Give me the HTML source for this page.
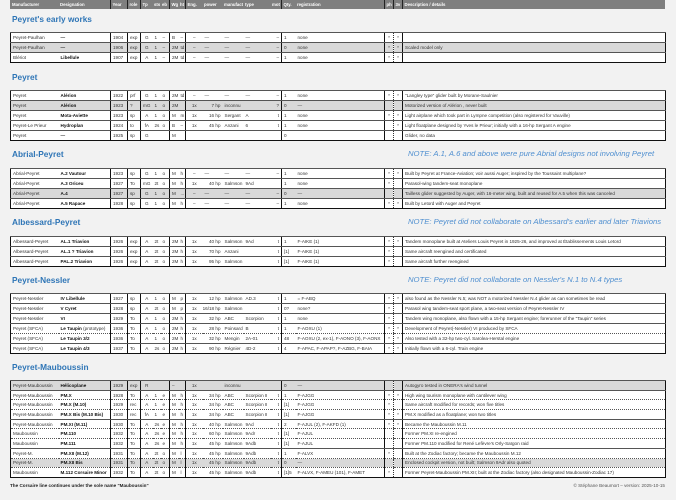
<!DOCTYPE html>
<html><head><meta charset="utf-8"><style>
body{margin:0;width:676px;height:500px;background:#f2f2f2;position:relative;overflow:hidden;font-family:"Liberation Sans",sans-serif}
table{position:absolute;left:10px;width:655px;border-collapse:collapse;table-layout:fixed;background:#fff;font-size:4.6px;color:#333;border:1.5px solid #111}
td{height:9px;padding:0 0 0 2px;white-space:nowrap;overflow:hidden;border-top:1px solid #555;line-height:9px;vertical-align:middle}
table.m td{height:8.7px;line-height:7px}
col.v{border-left:1px solid #111}
col.d{border-left:1px dotted #333}
td.c{text-align:center;padding:0}
td.r{text-align:right;padding:0 2px 0 0}
td.n{font-weight:bold;color:#111}
tr.g td{background:#d9d9d9}
tr.dt td{border-top:1px dotted #555}
table.h{top:0;border:none;background:#7f7f7f;color:#fff;font-weight:bold;font-size:4.3px}
table.h td{border-top:none;height:9px}
table.h col.v,table.h col.d{border-left:1px solid #222}
.t{position:absolute;left:12px;font-weight:bold;font-size:8.3px;color:#2e75b6}
.note{position:absolute;font-style:italic;font-size:7.7px;color:#4f8fd0;white-space:nowrap}
.foot{position:absolute;font-size:4.6px;color:#222}
</style></head><body>

<table class="h"><colgroup><col style="width:48px"><col style="width:52px"><col class="v" style="width:17px"><col class="v" style="width:13px"><col class="v" style="width:12px"><col style="width:8px"><col style="width:9px"><col class="v" style="width:9px"><col style="width:7px"><col class="v" style="width:17px"><col style="width:20px"><col style="width:21px"><col style="width:27px"><col style="width:11px"><col class="v" style="width:14px"><col style="width:89px"><col class="v" style="width:9px"><col class="d" style="width:9px"><col class="v" style="width:263px"></colgroup>
<tr><td>Manufacturer</td><td>Designation</td><td>Year</td><td>role</td><td>Tp</td><td>sts</td><td>eb</td><td>Wg</td><td>ht</td><td>Eng.</td><td>power</td><td>manufact.</td><td>type</td><td>mot</td><td>Qty.</td><td>registration</td><td>ph</td><td>3v</td><td>Description / details</td></tr></table>

<div class="t" style="top:14px">Peyret's early works</div>
<table style="top:32px"><colgroup><col style="width:48px"><col style="width:52px"><col class="v" style="width:17px"><col class="v" style="width:13px"><col class="v" style="width:12px"><col style="width:8px"><col style="width:9px"><col class="v" style="width:9px"><col style="width:7px"><col class="v" style="width:17px"><col style="width:20px"><col style="width:21px"><col style="width:27px"><col style="width:11px"><col class="v" style="width:14px"><col style="width:89px"><col class="v" style="width:9px"><col class="d" style="width:9px"><col class="v" style="width:263px"></colgroup>
<tr><td>Peyret-Paulhan</td><td class="n">—</td><td>1904</td><td>exp</td><td class="c">G</td><td>1</td><td>–</td><td>B</td><td>–</td><td class="c">–</td><td>—</td><td>—</td><td>—</td><td class="r">–</td><td>1</td><td>none</td><td class="c">*</td><td class="c">*</td><td></td></tr>
<tr class="g"><td>Peyret-Paulhan</td><td class="n">—</td><td>1906</td><td>exp</td><td class="c">G</td><td>1</td><td>–</td><td>2M</td><td>td</td><td class="c">–</td><td>—</td><td>—</td><td>—</td><td class="r">–</td><td>0</td><td>none</td><td class="c">*</td><td class="c">*</td><td>Scaled model only</td></tr>
<tr><td>Blériot</td><td class="n">Libellule</td><td>1907</td><td>exp</td><td class="c">A</td><td>1</td><td>–</td><td>2M</td><td>td</td><td class="c">–</td><td>—</td><td>—</td><td>—</td><td class="r">–</td><td>1</td><td>none</td><td class="c">*</td><td class="c">*</td><td></td></tr>
</table>

<div class="t" style="top:72px">Peyret</div>
<table style="top:90px"><colgroup><col style="width:48px"><col style="width:52px"><col class="v" style="width:17px"><col class="v" style="width:13px"><col class="v" style="width:12px"><col style="width:8px"><col style="width:9px"><col class="v" style="width:9px"><col style="width:7px"><col class="v" style="width:17px"><col style="width:20px"><col style="width:21px"><col style="width:27px"><col style="width:11px"><col class="v" style="width:14px"><col style="width:89px"><col class="v" style="width:9px"><col class="d" style="width:9px"><col class="v" style="width:263px"></colgroup>
<tr><td>Peyret</td><td class="n">Alérion</td><td>1922</td><td>prf</td><td class="c">G</td><td>1</td><td>o</td><td>2M</td><td>td</td><td class="c">–</td><td>—</td><td>—</td><td>—</td><td class="r">–</td><td>1</td><td>none</td><td class="c">*</td><td class="c">*</td><td>"Langley type" glider built by Morane-Saulnier</td></tr>
<tr class="g"><td>Peyret</td><td class="n">Alérion</td><td>1923</td><td>?</td><td class="c">mG</td><td>1</td><td>o</td><td>2M</td><td></td><td class="c">1x</td><td class="r">7 hp</td><td>inconnu</td><td></td><td class="r">?</td><td>0</td><td>—</td><td></td><td></td><td>Motorized version of Alérion , never built</td></tr>
<tr><td>Peyret</td><td class="n">Mota-Aviette</td><td>1923</td><td>sp</td><td class="c">A</td><td>1</td><td>o</td><td>M</td><td>m</td><td class="c">1x</td><td class="r">16 hp</td><td>Sergant</td><td>A</td><td class="r">t</td><td>1</td><td>none</td><td class="c">*</td><td class="c">*</td><td>Light airplane which took part in Lympne competition (also registered for Vauville)</td></tr>
<tr><td>Peyret-Le Prieur</td><td class="n">Hydroplan</td><td>1924</td><td>to</td><td class="c">fA</td><td>2s</td><td>o</td><td>B</td><td>–</td><td class="c">1x</td><td class="r">45 hp</td><td>Anzani</td><td>6</td><td class="r">t</td><td>1</td><td>none</td><td></td><td class="c">*</td><td>Light floatplane designed by Yves le Prieur; initially with a 16-hp Sergant A engine</td></tr>
<tr><td>Peyret</td><td class="n">—</td><td>1925</td><td>sp</td><td class="c">G</td><td></td><td></td><td>M</td><td></td><td></td><td></td><td></td><td></td><td></td><td>0</td><td></td><td></td><td></td><td>Glider, no data</td></tr>
</table>

<div class="t" style="top:149px">Abrial-Peyret</div>
<div class="note" style="top:149px;left:408px">NOTE: A.1, A.6 and above were pure Abrial designs not involving Peyret</div>
<table style="top:168px"><colgroup><col style="width:48px"><col style="width:52px"><col class="v" style="width:17px"><col class="v" style="width:13px"><col class="v" style="width:12px"><col style="width:8px"><col style="width:9px"><col class="v" style="width:9px"><col style="width:7px"><col class="v" style="width:17px"><col style="width:20px"><col style="width:21px"><col style="width:27px"><col style="width:11px"><col class="v" style="width:14px"><col style="width:89px"><col class="v" style="width:9px"><col class="d" style="width:9px"><col class="v" style="width:263px"></colgroup>
<tr><td>Abrial-Peyret</td><td class="n">A.2 Vautour</td><td>1923</td><td>sp</td><td class="c">G</td><td>1</td><td>o</td><td>M</td><td>h</td><td class="c">–</td><td>—</td><td>—</td><td>—</td><td class="r">–</td><td>1</td><td>none</td><td class="c">*</td><td class="c">*</td><td>Built by Peyret at France-Aviation; voir aussi Auger; inspired by the Toussaint multiplane?</td></tr>
<tr><td>Abrial-Peyret</td><td class="n">A.3 Oriceu</td><td>1927</td><td>To</td><td class="c">mG</td><td>2t</td><td>o</td><td>M</td><td>h</td><td class="c">1x</td><td class="r">40 hp</td><td>Salmson</td><td>9Ad</td><td></td><td>1</td><td>none</td><td class="c">*</td><td></td><td>Parasol-wing tandem-seat monoplane</td></tr>
<tr class="g"><td>Abrial-Peyret</td><td class="n">A.4</td><td>1927</td><td>sp</td><td class="c">G</td><td>1</td><td>o</td><td>M</td><td>...</td><td class="c">–</td><td>—</td><td>—</td><td>—</td><td class="r">–</td><td>0</td><td>—</td><td></td><td></td><td>Tailless glider suggested by Auger, with 16-meter wing, built and reused for A.5 when this was canceled</td></tr>
<tr><td>Abrial-Peyret</td><td class="n">A.5 Rapace</td><td>1928</td><td>sp</td><td class="c">G</td><td>1</td><td>o</td><td>M</td><td>h</td><td class="c">–</td><td>—</td><td>—</td><td>—</td><td class="r">–</td><td>1</td><td>none</td><td class="c">*</td><td class="c">*</td><td>Built by Letord with Auger and Peyret</td></tr>
</table>

<div class="t" style="top:217px">Albessard-Peyret</div>
<div class="note" style="top:217px;left:408px">NOTE: Peyret did not collaborate on Albessard's earlier and later Triavions</div>
<table style="top:236px"><colgroup><col style="width:48px"><col style="width:52px"><col class="v" style="width:17px"><col class="v" style="width:13px"><col class="v" style="width:12px"><col style="width:8px"><col style="width:9px"><col class="v" style="width:9px"><col style="width:7px"><col class="v" style="width:17px"><col style="width:20px"><col style="width:21px"><col style="width:27px"><col style="width:11px"><col class="v" style="width:14px"><col style="width:89px"><col class="v" style="width:9px"><col class="d" style="width:9px"><col class="v" style="width:263px"></colgroup>
<tr><td>Albessard-Peyret</td><td class="n">AL.1 Triavion</td><td>1926</td><td>exp</td><td class="c">A</td><td>2t</td><td>o</td><td>2M</td><td>h</td><td class="c">1x</td><td class="r">40 hp</td><td>Salmson</td><td>9Ad</td><td class="r">t</td><td>1</td><td>F-AIKE (1)</td><td class="c">*</td><td class="c">*</td><td>Tandem monoplane built at Ateliers Louis Peyret in 1925-26, and improved at Établissements Louis Letord</td></tr>
<tr><td>Albessard-Peyret</td><td class="n">AL.1 ? Triavion</td><td>1926</td><td>exp</td><td class="c">A</td><td>2t</td><td>o</td><td>2M</td><td>h</td><td class="c">1x</td><td class="r">70 hp</td><td>Anzani</td><td></td><td class="r">t</td><td>[1]</td><td>F-AIKE (1)</td><td class="c">*</td><td></td><td>Same aircraft reengined and certificated</td></tr>
<tr><td>Albessard-Peyret</td><td class="n">PAL.2 Triavion</td><td>1926</td><td>exp</td><td class="c">A</td><td>2t</td><td>o</td><td>2M</td><td>h</td><td class="c">1x</td><td class="r">95 hp</td><td>Salmson</td><td></td><td class="r">t</td><td>[1]</td><td>F-AIKE (1)</td><td class="c">*</td><td></td><td>Same aircraft further reengined</td></tr>
</table>

<div class="t" style="top:275px">Peyret-Nessler</div>
<div class="note" style="top:275px;left:408px">NOTE: Peyret did not collaborate on Nessler's N.1 to N.4 types</div>
<table style="top:293px"><colgroup><col style="width:48px"><col style="width:52px"><col class="v" style="width:17px"><col class="v" style="width:13px"><col class="v" style="width:12px"><col style="width:8px"><col style="width:9px"><col class="v" style="width:9px"><col style="width:7px"><col class="v" style="width:17px"><col style="width:20px"><col style="width:21px"><col style="width:27px"><col style="width:11px"><col class="v" style="width:14px"><col style="width:89px"><col class="v" style="width:9px"><col class="d" style="width:9px"><col class="v" style="width:263px"></colgroup>
<tr><td>Peyret-Nessler</td><td class="n">IV Libellule</td><td>1927</td><td>sp</td><td class="c">A</td><td>1</td><td>o</td><td>M</td><td>p</td><td class="c">1x</td><td class="r">12 hp</td><td>Salmson</td><td>AD.3</td><td class="r">t</td><td>1</td><td>= F-ABQ</td><td class="c">*</td><td class="c">*</td><td>also found as the Nessler N.5; was NOT a motorized Nessler N.4 glider as can sometimes be read</td></tr>
<tr><td>Peyret-Nessler</td><td class="n">V Cyret</td><td>1928</td><td>sp</td><td class="c">A</td><td>2t</td><td>o</td><td>M</td><td>p</td><td class="c">1x</td><td class="r">16/18 hp</td><td>Salmson</td><td></td><td class="r">t</td><td>0?</td><td>none?</td><td class="c">*</td><td></td><td>Parasol wing tandem-seat sport plane, a two-seat version of Peyret-Nessler IV</td></tr>
<tr><td>Peyret-Nessler</td><td class="n">VI</td><td>1929</td><td>To</td><td class="c">A</td><td>1</td><td>o</td><td>2M</td><td>h</td><td class="c">1x</td><td class="r">32 hp</td><td>ABC</td><td>Scorpion</td><td class="r">t</td><td>1</td><td>none</td><td class="c">*</td><td></td><td>Tandem wing monoplane, also flown with a 15-hp Sergant engine; forerunner of the "Taupin" series</td></tr>
<tr><td>Peyret (SFCA)</td><td><b style="color:#111">Le Taupin</b> (prototype)</td><td>1936</td><td>To</td><td class="c">A</td><td>1</td><td>o</td><td>2M</td><td>h</td><td class="c">1x</td><td class="r">28 hp</td><td>Poinsard</td><td>B</td><td class="r">t</td><td>1</td><td>F-AOXU (1)</td><td class="c">*</td><td class="c">*</td><td>Development of Peyret(-Nessler) VI produced by SFCA</td></tr>
<tr class="dt"><td>Peyret (SFCA)</td><td class="n">Le Taupin 3/2</td><td>1936</td><td>To</td><td class="c">A</td><td>1</td><td>o</td><td>2M</td><td>h</td><td class="c">1x</td><td class="r">32 hp</td><td>Mengin</td><td>2A-01</td><td class="r">t</td><td>48</td><td>F-AOXU (2, ex-1), F-AONO (3), F-AONX</td><td class="c">*</td><td class="c">*</td><td>Also tested with a 32-hp two-cyl. Sarolea-Herstal engine</td></tr>
<tr><td>Peyret (SFCA)</td><td class="n">Le Taupin 4/3</td><td>1937</td><td>To</td><td class="c">A</td><td>2s</td><td>o</td><td>2M</td><td>h</td><td class="c">1x</td><td class="r">90 hp</td><td>Régnier</td><td>4D-2</td><td class="r">t</td><td>4</td><td>F-APAC, F-APAP?, F-AZBG, F-BAIA</td><td class="c">*</td><td class="c">*</td><td>Initially flown with a 6-cyl. Train engine</td></tr>
</table>

<div class="t" style="top:362px">Peyret-Mauboussin</div>
<table class="m" style="top:380px"><colgroup><col style="width:48px"><col style="width:52px"><col class="v" style="width:17px"><col class="v" style="width:13px"><col class="v" style="width:12px"><col style="width:8px"><col style="width:9px"><col class="v" style="width:9px"><col style="width:7px"><col class="v" style="width:17px"><col style="width:20px"><col style="width:21px"><col style="width:27px"><col style="width:11px"><col class="v" style="width:14px"><col style="width:89px"><col class="v" style="width:9px"><col class="d" style="width:9px"><col class="v" style="width:263px"></colgroup>
<tr class="g"><td>Peyret-Mauboussin</td><td class="n">Hélicoplane</td><td>1929</td><td>exp</td><td class="c">R</td><td></td><td></td><td>–</td><td></td><td class="c">1x</td><td></td><td>inconnu</td><td></td><td></td><td>0</td><td>—</td><td></td><td></td><td>Autogyro tested in ONERA's wind tunnel</td></tr>
<tr><td>Peyret-Mauboussin</td><td class="n">PM.X</td><td>1928</td><td>To</td><td class="c">A</td><td>1</td><td>e</td><td>M</td><td>h</td><td class="c">1x</td><td class="r">34 hp</td><td>ABC</td><td>Scorpion II</td><td class="r">t</td><td>1</td><td>F-AJGG</td><td class="c">*</td><td class="c">*</td><td>High wing tourism monoplane with cantilever wing</td></tr>
<tr class="dt"><td>Peyret-Mauboussin</td><td class="n">PM.X (M.10)</td><td>1929</td><td>rec</td><td class="c">A</td><td>1</td><td>e</td><td>M</td><td>h</td><td class="c">1x</td><td class="r">34 hp</td><td>ABC</td><td>Scorpion II</td><td class="r">t</td><td>[1]</td><td>F-AJGG</td><td class="c">*</td><td></td><td>Same aircraft modified for records; won five titles</td></tr>
<tr class="dt"><td>Peyret-Mauboussin</td><td class="n">PM.X Bis (M.10 Bis)</td><td>1930</td><td>rec</td><td class="c">fA</td><td>1</td><td>e</td><td>M</td><td>h</td><td class="c">1x</td><td class="r">34 hp</td><td>ABC</td><td>Scorpion II</td><td class="r">t</td><td>[1]</td><td>F-AJGG</td><td class="c">*</td><td class="c">*</td><td>PM.X modified as a floatplane; won two titles</td></tr>
<tr><td>Peyret-Mauboussin</td><td class="n">PM.XI (M.11)</td><td>1930</td><td>To</td><td class="c">A</td><td>2s</td><td>e</td><td>M</td><td>h</td><td class="c">1x</td><td class="r">40 hp</td><td>Salmson</td><td>9Ad</td><td class="r">t</td><td>2</td><td>F-AJUL (2), F-AKFD (1)</td><td class="c">*</td><td class="c">*</td><td>Became the Mauboussin M.11</td></tr>
<tr class="dt"><td>Mauboussin</td><td class="n">PM.110</td><td>1932</td><td>To</td><td class="c">A</td><td>2s</td><td>e</td><td>M</td><td>h</td><td class="c">1x</td><td class="r">60 hp</td><td>Salmson</td><td>9Adr</td><td class="r">t</td><td>[1]</td><td>F-AJUL</td><td></td><td></td><td>Former PM.XI re-engined</td></tr>
<tr class="dt"><td>Mauboussin</td><td class="n">PM.111</td><td>1932</td><td>To</td><td class="c">A</td><td>2s</td><td>e</td><td>M</td><td>h</td><td class="c">1x</td><td class="r">45 hp</td><td>Salmson</td><td>9Adb</td><td class="r">t</td><td>[1]</td><td>F-AJUL</td><td></td><td></td><td>Former PM.110 modified for René Lefèvre's Orly-Saïgon raid</td></tr>
<tr><td>Peyret-M.</td><td class="n">PM.XII (M.12)</td><td>1931</td><td>To</td><td class="c">A</td><td>2t</td><td>o</td><td>M</td><td>l</td><td class="c">1x</td><td class="r">45 hp</td><td>Salmson</td><td>9Adb</td><td class="r">t</td><td>1</td><td>F-ALVX</td><td class="c">*</td><td></td><td>Built at the Zodiac factory; became the Mauboussin M.12</td></tr>
<tr class="g dt"><td>Peyret-M.</td><td class="n">PM.XII Bis</td><td>1931</td><td>To</td><td class="c">A</td><td>2t</td><td>o</td><td>M</td><td>l</td><td class="c">1x</td><td class="r">45 hp</td><td>Salmson</td><td>9Adb</td><td class="r">t</td><td>0</td><td>—</td><td></td><td></td><td>Enclosed cockpit version, not built; Salmson 9Adr also quoted</td></tr>
<tr class="dt"><td>Mauboussin</td><td class="n">M.112 Corsaire Minor</td><td>1932</td><td>To</td><td class="c">A</td><td>2t</td><td>o</td><td>M</td><td>l</td><td class="c">1x</td><td class="r">45 hp</td><td>Salmson</td><td>9Adb</td><td class="r">t</td><td>[1]5</td><td>F-ALVX, F-AMEU (101), F-AMET</td><td class="c">*</td><td></td><td>Former Peyret-Mauboussin PM.XII; built at the Zodiac factory (also designated Mauboussin-Zodiac 17)</td></tr>
</table>

<div class="foot" style="left:10px;top:483px;font-weight:bold">The Corsaire line continues under the sole name "Mauboussin"</div>
<div class="foot" style="right:11px;top:483px;color:#555">© Stéphane Beaumort – version: 2025-10-15</div>
</body></html>
